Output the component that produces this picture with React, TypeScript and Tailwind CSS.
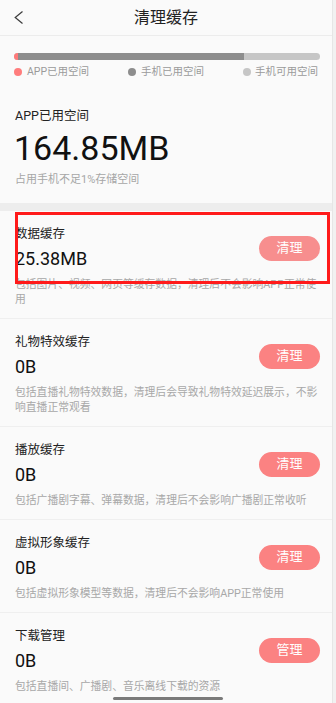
import React from "react";

const items = [
  {
    title: "数据缓存",
    value: "25.38MB",
    desc: "包括图片、视频、网页等缓存数据，清理后不会影响APP正常使用",
    btn: "清理",
    faded: true,
  },
  {
    title: "礼物特效缓存",
    value: "0B",
    desc: "包括直播礼物特效数据，清理后会导致礼物特效延迟展示，不影响直播正常观看",
    btn: "清理",
  },
  {
    title: "播放缓存",
    value: "0B",
    desc: "包括广播剧字幕、弹幕数据，清理后不会影响广播剧正常收听",
    btn: "清理",
  },
  {
    title: "虚拟形象缓存",
    value: "0B",
    desc: "包括虚拟形象模型等数据，清理后不会影响APP正常使用",
    btn: "清理",
  },
  {
    title: "下载管理",
    value: "0B",
    desc: "包括直播间、广播剧、音乐离线下载的资源",
    btn: "管理",
  },
];

export default function App() {
  return (
    <div
      className="relative w-[336px] h-[703px] overflow-hidden bg-[#f1f1f1]"
      style={{ fontFamily: "Roboto, 'Noto Sans CJK SC', sans-serif" }}
    >
      <div className="w-[333px] h-full bg-[#fafafa] border-r border-[#e6e6e6]">
        {/* Header */}
        <div className="grid grid-cols-[48px_1fr_48px] items-center h-[36px] border-b border-[#ececec]">
          <div className="pl-[14px] flex items-center">
            <svg width="10" height="13" viewBox="0 0 10 13" fill="none">
              <polyline points="8.5,0.5 1.2,6.5 8.5,12.5" stroke="#3c3c3c" strokeWidth="1.2" />
            </svg>
          </div>
          <div className="text-center text-[16px] leading-[20px] text-[#222]">清理缓存</div>
          <div />
        </div>

        {/* Storage summary */}
        <div className="px-[14px] pt-[17px] pb-[16px]">
          <div className="flex h-[7px] w-[306px] rounded-full overflow-hidden bg-[#c6c6c6]">
            <div className="w-[4px] bg-[#ff7a7a]" />
            <div className="w-[226px] bg-[#8d8d8d]" />
          </div>
          <div className="mt-[5px] flex justify-between items-center text-[10.5px] leading-[14px] text-[#9a9a9a]">
            <div className="flex items-center gap-[5px]">
              <span className="w-[8px] h-[8px] rounded-full bg-[#ff7d7d]" />
              <span>APP已用空间</span>
            </div>
            <div className="flex items-center gap-[5px]">
              <span className="w-[8px] h-[8px] rounded-full bg-[#8d8d8d]" />
              <span>手机已用空间</span>
            </div>
            <div className="flex items-center gap-[4px]">
              <span className="w-[8px] h-[8px] rounded-full bg-[#c6c6c6]" />
              <span>手机可用空间</span>
            </div>
          </div>
          <div className="mt-[28px] px-[1px] text-[12.5px] leading-[18px] text-[#222]">APP已用空间</div>
          <div className="mt-[3px] text-[34px] leading-[40px] text-[#111]">164.85MB</div>
          <div className="mt-[5px] px-[1px] text-[11px] leading-[14px] text-[#a6a6a6]">占用手机不足1%存储空间</div>
        </div>

        <div className="h-[8px] bg-[#ededed]" />

        {items.map((it) => (
          <div key={it.title} className="pl-[15px] pr-[12px] pt-[14px] pb-[11px] border-b border-[#efefef]">
            <div className="flex items-center justify-between">
              <div>
                <div className="text-[12.5px] leading-[18px] text-[#222]">{it.title}</div>
                <div className="mt-[4px] text-[18px] leading-[24px] text-[#111]">{it.value}</div>
              </div>
              <div
                className={
                  "w-[61px] h-[25px] rounded-full flex items-center justify-center text-[13px] text-white " +
                  (it.faded ? "bg-[#f78e8e]" : "bg-[#fb8282]")
                }
              >
                {it.btn}
              </div>
            </div>
            <div className="mt-[6px] -mr-[2px] text-[10.8px] leading-[15px] text-[#a8a8a8]">{it.desc}</div>
          </div>
        ))}
      </div>

      {/* Red annotation box */}
      <div className="absolute left-[15px] top-[212px] w-[315px] h-[72px] border-[3px] border-[#ff1a1a]" />

      {/* Home indicator */}
      <div className="absolute left-[113px] bottom-[3px] w-[110px] h-[3px] rounded-full bg-[#7a7a7a]" />
    </div>
  );
}
